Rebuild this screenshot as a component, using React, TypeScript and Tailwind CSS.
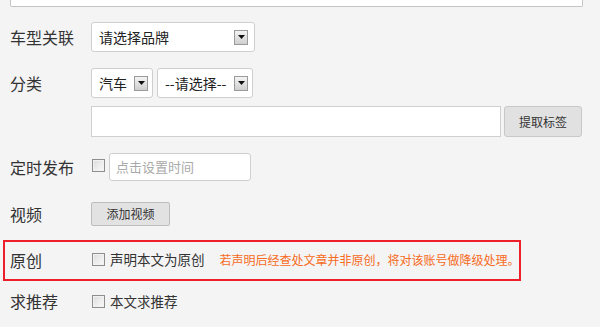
import React from "react";

const font = { fontFamily: '"Noto Sans CJK SC", "Noto Sans", sans-serif' };

function Arrow() {
  return (
    <span className="flex h-[15px] w-[14px] items-center justify-center border border-[#9a9a9a] bg-gradient-to-b from-[#f4f4f4] to-[#cfcfcf]">
      <svg width="7" height="4" viewBox="0 0 7 4">
        <path d="M0 0h7L3.5 4z" fill="#111" />
      </svg>
    </span>
  );
}

function Check() {
  return (
    <span className="box-border flex h-[13px] w-[13px] shrink-0 border border-[#8e8e8e] bg-gradient-to-br from-[#dcdcdc] to-[#fbfbfb] shadow-[inset_0_0_0_1px_#f2f2f2]" />
  );
}

function Label({ children }: { children: React.ReactNode }) {
  return <div className="w-[81px] shrink-0 text-[16px] leading-none text-[#333]">{children}</div>;
}

export default function App() {
  return (
    <div className="relative h-[333px] w-[600px] overflow-hidden bg-white" style={font}>
      <div className="h-[327px] bg-[#f4f4f4]">
        <div className="ml-[10px] h-[7px] w-[573px] rounded-b-[2px] border-x border-b border-[#c4c4c4] bg-white" />

        <div className="mt-[15px] flex items-center pl-[10px]">
          <Label>车型关联</Label>
          <div className="flex h-[30px] w-[164px] items-center justify-between rounded-[3px] border border-[#cfcfcf] bg-white pl-[7px] pr-[6px] text-[14px] text-[#222]">
            <span>请选择品牌</span>
            <Arrow />
          </div>
        </div>

        <div className="mt-[16px] flex items-center pl-[10px]">
          <Label>分类</Label>
          <div className="flex h-[30px] w-[62px] items-center justify-between rounded-[3px] border border-[#cfcfcf] bg-white pl-[7px] pr-[4px] text-[14px] text-[#222]">
            <span>汽车</span>
            <Arrow />
          </div>
          <div className="ml-[4px] flex h-[30px] w-[96px] items-center justify-between rounded-[3px] border border-[#cfcfcf] bg-white pl-[7px] pr-[4px] text-[14px] text-[#222]">
            <span>--请选择--</span>
            <Arrow />
          </div>
        </div>

        <div className="mt-[8px] flex items-center pl-[91px]">
          <div className="h-[31px] w-[410px] border border-[#d0d0d0] bg-white" />
          <div className="ml-[3px] flex h-[31px] w-[78px] items-center justify-center rounded-[3px] border border-[#c8c8c8] bg-[#e1e1e1] text-[12px] text-[#333]">
            提取标签
          </div>
        </div>

        <div className="mt-[16px] flex items-center pl-[10px]">
          <Label>定时发布</Label>
          <span className="ml-[1px] -mt-[4px]"><Check /></span>
          <div className="ml-[4px] flex h-[28px] w-[142px] items-center rounded-[3px] border border-[#cfcfcf] bg-white pl-[6px] text-[13px] text-[#aaa]">
            点击设置时间
          </div>
        </div>

        <div className="mt-[21px] flex items-center pl-[10px]">
          <Label>视频</Label>
          <div className="flex h-[24px] w-[79px] items-center justify-center rounded-[2px] border border-[#bdbdbd] bg-[#e2e2e2] text-[12px] text-[#333]">
            添加视频
          </div>
        </div>

        <div className="ml-[3px] mt-[14px] flex h-[41px] w-[518px] items-center whitespace-nowrap border-2 border-[#ec1f2a] pb-[2px] pl-[5px]">
          <Label>原创</Label>
          <span className="ml-[1px]"><Check /></span>
          <span className="ml-[5px] shrink-0 text-[13.5px] text-[#333]">声明本文为原创</span>
          <span className="ml-[15px] shrink-0 text-[12px] text-[#f76b1c]">若声明后经查处文章并非原创，将对该账号做降级处理。</span>
        </div>

        <div className="mt-[10px] flex items-center pl-[10px]">
          <Label>求推荐</Label>
          <span className="ml-[1px]"><Check /></span>
          <span className="ml-[5px] text-[13.5px] text-[#333]">本文求推荐</span>
        </div>
      </div>
    </div>
  );
}
